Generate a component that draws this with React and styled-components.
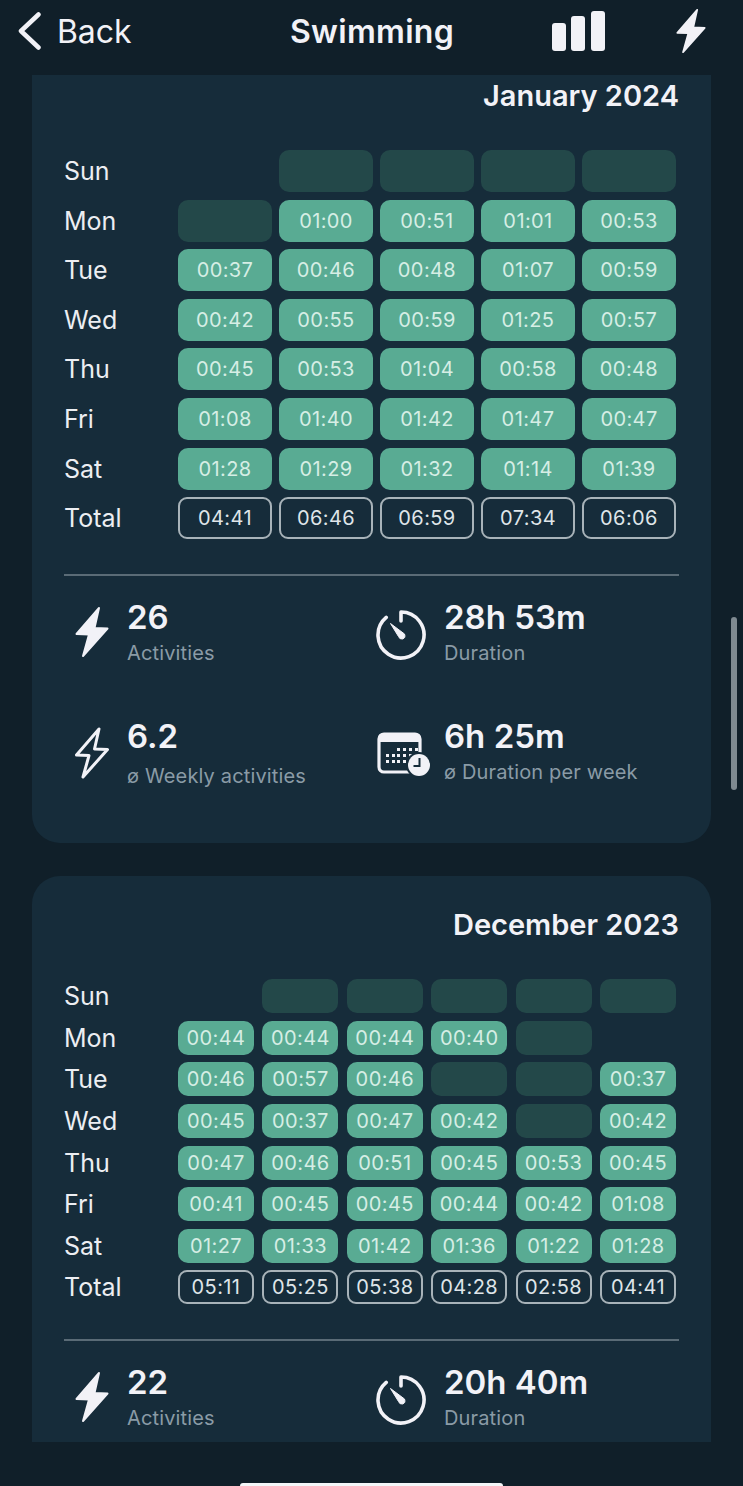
import React from "react";
import styled, { createGlobalStyle } from "styled-components";

const GlobalStyle = createGlobalStyle`
  html, body {
    margin: 0;
    padding: 0;
    height: 100%;
    overflow: hidden;
    background: #101f29;
  }
  body {
    font-family: Inter, "Noto Sans", sans-serif;
    color: #f2f2f7;
  }
`;

const Screen = styled.div`
  position: relative;
  width: 743px;
  height: 1486px;
  overflow: hidden;
  background: #101f29;
`;

const Header = styled.header`
  height: 75px;
  display: grid;
  grid-template-columns: 272px auto 1fr;
  align-items: center;
  padding: 0 37px 13px 18px;
  box-sizing: border-box;
`;

const BackLink = styled.div`
  display: flex;
  align-items: center;
  gap: 16px;
  font-size: 32px;
  font-weight: 400;
  letter-spacing: -0.1px;
`;

const Title = styled.div`
  font-size: 32px;
  font-weight: 600;
  letter-spacing: 0.3px;
`;

const HeaderActions = styled.div`
  display: flex;
  justify-content: flex-end;
  align-items: center;
  gap: 71px;
`;

const Scroller = styled.main`
  height: 1367px;
  overflow: hidden;
  display: flex;
  flex-direction: column;
  gap: 33px;
  padding: 0 32px;
`;

const Card = styled.section`
  flex: none;
  background: #162c3a;
  border-radius: ${(p) => (p.$cut ? "0 0 28px 28px" : "28px")};
  padding: ${(p) => (p.$cut ? "4px" : "32px")} 32px 54px;
`;

const MonthTitle = styled.h2`
  margin: 0 0 37px;
  text-align: right;
  font-size: 29px;
  line-height: 34px;
  font-weight: 600;
`;

const Grid = styled.div`
  display: grid;
  grid-template-columns: ${(p) => 114 - p.$colGap}px repeat(${(p) => p.$cols}, 1fr);
  grid-auto-rows: ${(p) => p.$rowHeight}px;
  column-gap: ${(p) => p.$colGap}px;
  row-gap: ${(p) => p.$rowGap}px;
  padding-right: 3px;
  align-items: stretch;
`;

const DayLabel = styled.div`
  display: flex;
  align-items: center;
  font-size: 25px;
  color: #eceef2;
`;

const Cell = styled.div`
  display: flex;
  align-items: center;
  justify-content: center;
  border-radius: 10px;
  font-size: 20px;
  letter-spacing: 0.4px;
  color: #d6eee5;
  background: ${(p) => (p.$empty ? "#234849" : "#59ab93")};
`;

const BlankCell = styled.div``;

const TotalCell = styled.div`
  display: flex;
  align-items: center;
  justify-content: center;
  box-sizing: border-box;
  border: 2px solid #a8b3b9;
  border-radius: 9px;
  font-size: 20px;
  letter-spacing: 0.4px;
  color: #dfe5e9;
`;

const Divider = styled.hr`
  margin: 35px 0 21px;
  border: 0;
  height: 2px;
  background: #5a6b76;
`;

const Stats = styled.div`
  display: grid;
  grid-template-columns: 300px 1fr;
  row-gap: 50px;
  padding-left: 11px;
  align-items: start;
`;

const Stat = styled.div`
  display: grid;
  grid-template-columns: ${(p) => p.$iconWidth}px 1fr;
  align-items: center;
`;

const StatIcon = styled.div`
  display: flex;
  margin-top: ${(p) => p.$nudge || 0}px;
`;

const StatValue = styled.div`
  font-size: 33px;
  line-height: 40px;
  font-weight: 600;
`;

const StatLabel = styled.div`
  margin-top: ${(p) => p.$gap}px;
  font-size: 20px;
  line-height: 26px;
  letter-spacing: 0.15px;
  color: #8a9ba6;
`;

const Scrollbar = styled.div`
  position: absolute;
  left: 731px;
  top: 617px;
  width: 6px;
  height: 173px;
  border-radius: 3px;
  background: #7f8a91;
`;

const HomeIndicator = styled.div`
  position: absolute;
  left: 240px;
  bottom: 0;
  width: 263px;
  height: 3px;
  border-radius: 3px 3px 0 0;
  background: #f4f7f9;
`;

const ICON = "#f2f2f7";
const BOLT = "M24 2 L1.5 28 L14 28.5 L8 50 L32.5 22.5 L19.5 22 Z";

const Chevron = () => (
  <svg width="23" height="38" viewBox="0 0 23 38" fill="none">
    <path d="M20.5 2.5 L3 19 L20.5 35.5" stroke={ICON} strokeWidth="4.5" strokeLinecap="round" strokeLinejoin="round" />
  </svg>
);

const Bars = () => (
  <svg width="53" height="40" viewBox="0 0 53 40" fill={ICON}>
    <rect x="0" y="12" width="14" height="28" rx="3" />
    <rect x="19" y="5" width="14" height="35" rx="3" />
    <rect x="39" y="0" width="14" height="40" rx="3" />
  </svg>
);

const Bolt = ({ width = 34, height = 52, outline }) => (
  <svg width={width} height={height} viewBox="0 0 34 52">
    <path
      d={BOLT}
      fill={outline ? "none" : ICON}
      stroke={ICON}
      strokeWidth={outline ? 3 : 2}
      strokeLinejoin="round"
    />
  </svg>
);

const Stopwatch = () => (
  <svg width="52" height="52" viewBox="0 0 52 52" fill="none">
    <path
      d="M26 12 V3 A23 23 0 1 1 11.2 8.4"
      stroke={ICON}
      strokeWidth="3.6"
      strokeLinecap="round"
      strokeLinejoin="round"
    />
    <path d="M15.5 14.5 L29.5 25 Q31 29 27.5 30 Q24.5 30.5 23.5 27.5 Z" fill={ICON} stroke={ICON} strokeLinejoin="round" />
  </svg>
);

const CalendarClock = () => (
  <svg width="58" height="46" viewBox="-2 0 58 46" fill="none">
    <rect x="2" y="2" width="41" height="38" rx="5" stroke={ICON} strokeWidth="3.2" />
    <path d="M2 7 a5 5 0 0 1 5 -5 H38 a5 5 0 0 1 5 5 V10 H2 Z" fill={ICON} />
    {[
      [20, 16], [26, 16], [32, 16], [38, 16],
      [9, 22], [15, 22], [20, 22], [26, 22], [32, 22],
      [9, 28], [15, 28], [20, 28], [26, 28],
    ].map(([x, y]) => (
      <rect key={`${x}-${y}`} x={x} y={y} width="3" height="3" fill={ICON} />
    ))}
    <circle cx="42" cy="33" r="13" fill="#162c3a" />
    <circle cx="42" cy="33" r="11" fill={ICON} />
    <path d="M42.5 26 V34 H36.5" stroke="#162c3a" strokeWidth="2" />
  </svg>
);

const DAYS = ["Sun", "Mon", "Tue", "Wed", "Thu", "Fri", "Sat"];

// null = no day in that month, "" = day without activity
const january = [
  [null, "", "", "", ""],
  ["", "01:00", "00:51", "01:01", "00:53"],
  ["00:37", "00:46", "00:48", "01:07", "00:59"],
  ["00:42", "00:55", "00:59", "01:25", "00:57"],
  ["00:45", "00:53", "01:04", "00:58", "00:48"],
  ["01:08", "01:40", "01:42", "01:47", "00:47"],
  ["01:28", "01:29", "01:32", "01:14", "01:39"],
];
const januaryTotals = ["04:41", "06:46", "06:59", "07:34", "06:06"];

const december = [
  [null, "", "", "", "", ""],
  ["00:44", "00:44", "00:44", "00:40", "", null],
  ["00:46", "00:57", "00:46", "", "", "00:37"],
  ["00:45", "00:37", "00:47", "00:42", "", "00:42"],
  ["00:47", "00:46", "00:51", "00:45", "00:53", "00:45"],
  ["00:41", "00:45", "00:45", "00:44", "00:42", "01:08"],
  ["01:27", "01:33", "01:42", "01:36", "01:22", "01:28"],
];
const decemberTotals = ["05:11", "05:25", "05:38", "04:28", "02:58", "04:41"];

const MonthGrid = ({ rows, totals, rowHeight, colGap, rowGap }) => (
  <Grid $cols={totals.length} $rowHeight={rowHeight} $colGap={colGap} $rowGap={rowGap}>
    {rows.map((row, r) => (
      <React.Fragment key={DAYS[r]}>
        <DayLabel>{DAYS[r]}</DayLabel>
        {row.map((v, c) =>
          v === null ? <BlankCell key={c} /> : <Cell key={c} $empty={v === ""}>{v}</Cell>
        )}
      </React.Fragment>
    ))}
    <DayLabel>Total</DayLabel>
    {totals.map((t, c) => (
      <TotalCell key={c}>{t}</TotalCell>
    ))}
  </Grid>
);

const StatItem = ({ icon, iconWidth, nudge, value, label, gap = 3 }) => (
  <Stat $iconWidth={iconWidth}>
    <StatIcon $nudge={nudge}>{icon}</StatIcon>
    <div>
      <StatValue>{value}</StatValue>
      <StatLabel $gap={gap}>{label}</StatLabel>
    </div>
  </Stat>
);

export default function App() {
  return (
    <Screen>
      <GlobalStyle />
      <Header>
        <BackLink>
          <Chevron />
          Back
        </BackLink>
        <Title>Swimming</Title>
        <HeaderActions>
          <Bars />
          <Bolt width={30} height={46} />
        </HeaderActions>
      </Header>

      <Scroller>
        <Card $cut>
          <MonthTitle>January 2024</MonthTitle>
          <MonthGrid rows={january} totals={januaryTotals} rowHeight={42} colGap={7} rowGap={7.6} />
          <Divider />
          <Stats>
            <StatItem icon={<Bolt />} iconWidth={52} value="26" label="Activities" />
            <StatItem icon={<Stopwatch />} iconWidth={69} nudge={6} value="28h 53m" label="Duration" />
            <StatItem icon={<Bolt outline />} iconWidth={52} value="6.2" label="ø Weekly activities" gap={7} />
            <StatItem icon={<CalendarClock />} iconWidth={69} nudge={8} value="6h 25m" label="ø Duration per week" />
          </Stats>
        </Card>

        <Card>
          <MonthTitle>December 2023</MonthTitle>
          <MonthGrid rows={december} totals={decemberTotals} rowHeight={34} colGap={8.4} rowGap={7.6} />
          <Divider />
          <Stats>
            <StatItem icon={<Bolt />} iconWidth={52} value="22" label="Activities" />
            <StatItem icon={<Stopwatch />} iconWidth={69} nudge={6} value="20h 40m" label="Duration" />
          </Stats>
        </Card>
      </Scroller>

      <Scrollbar />
      <HomeIndicator />
    </Screen>
  );
}
